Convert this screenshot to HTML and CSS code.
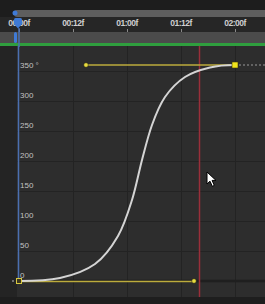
FILE: index.html
```html
<!DOCTYPE html>
<html>
<head>
<meta charset="utf-8">
<link rel="stylesheet" href="styles.css">
</head>
<body>
<div class="app">
  <div class="topbar"></div>
  <div class="workbar"><div class="workarea"></div></div>
  <div class="ruler">
    <div class="tick"><span>00:00f</span></div>
    <div class="tick"><span>00:12f</span></div>
    <div class="tick"><span>01:00f</span></div>
    <div class="tick"><span>01:12f</span></div>
    <div class="tick"><span>02:00f</span></div>
  </div>
  <div class="layerbar"></div>
  <div class="greenline"></div>
  <div class="graph">
    <svg class="graph-svg" width="265" height="251" viewBox="0 46 265 251">
      <rect x="0" y="46" width="17" height="251" fill="#242424"/>
      <rect x="17" y="46" width="248" height="251" fill="#2d2d2d"/>
      <g stroke="#232323" stroke-width="1">
        <line x1="17" y1="71.5" x2="265" y2="71.5"/>
        <line x1="17" y1="101.5" x2="265" y2="101.5"/>
        <line x1="17" y1="131.5" x2="265" y2="131.5"/>
        <line x1="17" y1="161.5" x2="265" y2="161.5"/>
        <line x1="17" y1="191.5" x2="265" y2="191.5"/>
        <line x1="17" y1="221.5" x2="265" y2="221.5"/>
        <line x1="17" y1="251.5" x2="265" y2="251.5"/>
        <line x1="73.5" y1="46" x2="73.5" y2="297"/>
        <line x1="127.5" y1="46" x2="127.5" y2="297"/>
        <line x1="181.5" y1="46" x2="181.5" y2="297"/>
        <line x1="235.5" y1="46" x2="235.5" y2="297"/>
      </g>
      <line x1="17" y1="281" x2="265" y2="281" stroke="#1f1f1f" stroke-width="2.5"/>
      <line x1="199.5" y1="46" x2="199.5" y2="297" stroke="#9a2f3a" stroke-width="1.5"/>
      <line x1="18.5" y1="46" x2="18.5" y2="281" stroke="#4a6fb0" stroke-width="1.5"/>
      <g class="vlabels">
        <text x="20" y="68">350 °</text>
        <text x="20" y="98">300</text>
        <text x="20" y="128">250</text>
        <text x="20" y="158">200</text>
        <text x="20" y="188">150</text>
        <text x="20" y="218">100</text>
        <text x="20" y="248">50</text>
        <text x="20" y="278">0</text>
      </g>
      <line x1="239" y1="65" x2="265" y2="65" stroke="#9a9a9a" stroke-width="1.2" stroke-dasharray="2 2"/>
      <line x1="86" y1="65" x2="235" y2="65" stroke="#bcab3c" stroke-width="1.5"/>
      <line x1="19" y1="281.5" x2="194" y2="281.5" stroke="#bcab3c" stroke-width="1.5"/>
      <path fill="none" stroke="#d4d4d4" stroke-width="2" stroke-linecap="round"
        d="M19 281 C25.8 281 47.3 280.8 60 278
           C72.7 275.2 85.3 271 95 264
           C104.7 257 111.8 246.7 118 236
           C124.2 225.3 128 212.7 132 200
           C136 187.3 138.7 172.5 142 160
           C145.3 147.5 148.2 135.5 152 125
           C155.8 114.5 159.5 105 165 97
           C170.5 89 177.5 81.9 185 77
           C192.5 72.1 201.7 69.5 210 67.5
           C218.3 65.5 229 65 235 65"/>
      <rect x="232" y="62" width="6" height="6" fill="#f2e51c" stroke="#3a3510" stroke-width="0.6"/>
      <rect x="16.5" y="278.5" width="5" height="5" fill="#3a3520" stroke="#d8c840" stroke-width="1"/>
      <circle cx="86" cy="65" r="2.3" fill="#e8dc40" stroke="#2a2a10" stroke-width="0.6"/>
      <circle cx="194" cy="281" r="2.3" fill="#e8dc40" stroke="#2a2a10" stroke-width="0.6"/>
      <circle cx="13" cy="281" r="1" fill="#888"/>
    </svg>
  </div>
  <div class="bottombar"></div>

  <svg class="playhead" width="12" height="37" viewBox="0 0 12 37">
    <line x1="7" y1="18" x2="7" y2="37" stroke="#4a6fb0" stroke-width="1.5"/>
    <circle cx="3" cy="3" r="2.5" fill="#3f7ad6"/>
    <path d="M2 9.5 Q2 8 3.5 8 H8.5 Q10 8 10 9.5 V14 L6 18.5 L2 14 Z" fill="#3f7ad6"/>
    <rect x="2" y="22" width="3" height="11" rx="1.5" fill="#3f7ad6"/>
  </svg>

  <svg class="cursor" width="12" height="17" viewBox="0 0 12 17">
    <path d="M1 1 V13 L4 10.2 L6.3 15.3 L8.3 14.4 L6.1 9.4 H10 Z" fill="#ffffff" stroke="#000" stroke-width="1" stroke-linejoin="round"/>
  </svg>
</div>
</body>
</html>
```

FILE: styles.css
```css
* { box-sizing: border-box; }
html, body {
  margin: 0;
  padding: 0;
  background: #1e1e1e;
}
.app {
  position: relative;
  width: 265px;
  height: 304px;
  overflow: hidden;
  display: flex;
  flex-direction: column;
  font-family: "Liberation Sans", Arial, sans-serif;
}
.topbar {
  height: 10px;
  background: #1d1d1d;
}
.workbar {
  height: 7px;
  padding-left: 14px;
  background: #1d1d1d;
}
.workarea {
  height: 100%;
  background: #5e5e5e;
  border-radius: 3px 0 0 3px;
}
.ruler {
  height: 15px;
  background: #262626;
  display: flex;
  margin-left: -8px;
  padding-left: 0;
  position: relative;
}
.tick {
  width: 54px;
  flex: 0 0 54px;
  position: relative;
  text-align: center;
}
.tick span {
  display: block;
  font-size: 8.5px;
  font-weight: bold;
  letter-spacing: -0.5px;
  color: #cfcfcf;
  line-height: 10px;
  padding-top: 1px;
}
.tick::after {
  content: "";
  position: absolute;
  left: 27px;
  bottom: 0;
  width: 1px;
  height: 3px;
  background: #8a8a8a;
}
.layerbar {
  height: 11px;
  background: #4b4b4b;
}
.greenline {
  height: 3px;
  background: #2f9e3e;
}
.graph {
  height: 251px;
}
.graph-svg {
  display: block;
}
.vlabels text {
  font-family: "Liberation Sans", Arial, sans-serif;
  font-size: 8px;
  fill: #c2c2c2;
}
.bottombar {
  flex: 1;
  background: #1e1e1e;
}
.playhead {
  position: absolute;
  left: 12px;
  top: 10px;
}
.cursor {
  position: absolute;
  left: 206px;
  top: 171px;
}
```
